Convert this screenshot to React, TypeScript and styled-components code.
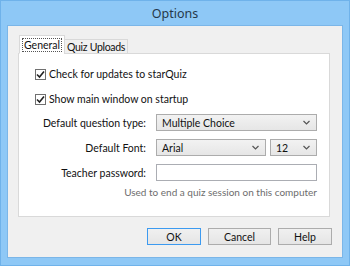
import React from 'react';
import styled, { createGlobalStyle } from 'styled-components';

const Global = createGlobalStyle`
  html, body { margin: 0; padding: 0; background: #8ec8f6; }
  body { font-family: Lato, "Noto Sans", sans-serif; }
`;

const Frame = styled.div`
  width: 350px;
  height: 266px;
  box-sizing: border-box;
  background: #8ec8f6;
  border: 1px solid #6fb2ea;
  display: flex;
  flex-direction: column;
  padding: 0 6px 7px 6px;
`;

const Title = styled.div`
  height: 24px;
  display: flex;
  align-items: center;
  justify-content: center;
  font-family: "Noto Sans", sans-serif;
  font-size: 12.5px;
  color: #26384a;
`;

const Client = styled.div`
  flex: 1;
  background: #f0f0f0;
  border: 1px solid #7bb6e8;
  padding: 9px 12px 0 10px;
  display: flex;
  flex-direction: column;
`;

const Tabs = styled.div`
  display: flex;
  align-items: flex-end;
  height: 19px;
  margin-bottom: -1px;
  position: relative;
  z-index: 1;
`;

const Tab = styled.div<{ $active?: boolean }>`
  box-sizing: border-box;
  height: ${p => (p.$active ? 19 : 15)}px;
  padding: 0 ${p => (p.$active ? 3 : 2)}px;
  margin-left: ${p => (p.$active ? 1 : -1)}px;
  border: 1px solid #d9d9d9;
  border-bottom: ${p => (p.$active ? '1px solid #fff' : '1px solid #d9d9d9')};
  background: ${p => (p.$active ? '#fff' : '#f0f0f0')};
  font-size: 10.5px;
  letter-spacing: ${p => (p.$active ? 0 : -0.3)}px;
  color: #111;
  display: flex;
  align-items: center;
`;

const Focus = styled.span`
  outline: 1px dotted #555;
  padding: 0 1px;
  line-height: 12px;
`;

const Panel = styled.div`
  height: 164px;
  background: #fff;
  border: 1px solid #d9d9d9;
  box-sizing: border-box;
  padding: 13px 14px 0 16px;
  font-size: 10.5px;
  color: #111;
`;

const Check = styled.label`
  display: flex;
  align-items: center;
  gap: 3px;
  height: 14px;
  margin-bottom: 11px;
`;

const Box = styled.span`
  width: 11px;
  height: 11px;
  box-sizing: border-box;
  border: 1px solid #707070;
  background: #fff;
  display: flex;
  align-items: center;
  justify-content: center;
`;

const Form = styled.div`
  display: grid;
  grid-template-columns: 111px 1fr;
  column-gap: 10px;
  row-gap: 8px;
  align-items: center;
  margin-top: -3px;
`;

const Label = styled.div`
  text-align: right;
`;

const Combo = styled.div<{ $w?: number }>`
  box-sizing: border-box;
  height: 17px;
  width: ${p => (p.$w ? `${p.$w}px` : '100%')};
  border: 1px solid #acacac;
  background: linear-gradient(#f2f2f2, #e6e6e6);
  display: flex;
  align-items: center;
  justify-content: space-between;
  padding: 0 6px 0 5px;
`;

const Pair = styled.div`
  display: flex;
  gap: 4px;
`;

const Input = styled.div`
  box-sizing: border-box;
  height: 17px;
  border: 1px solid #abadb3;
  background: #fff;
`;

const Hint = styled.div`
  grid-column: 1 / 3;
  text-align: right;
  color: #6d6d6d;
  font-size: 10px;
  margin-top: -3px;
`;

const Buttons = styled.div`
  display: flex;
  justify-content: flex-end;
  gap: 7px;
  margin-top: 11px;
  margin-right: -2px;
`;

const Button = styled.div<{ $w: number; $default?: boolean }>`
  box-sizing: border-box;
  width: ${p => p.$w}px;
  height: 17px;
  border: 1px solid ${p => (p.$default ? '#3c9af0' : '#acacac')};
  background: linear-gradient(#f0f0f0, #e5e5e5);
  display: flex;
  align-items: center;
  justify-content: center;
  font-size: 10.5px;
  color: #111;
`;

const Tick = () => (
  <svg width="9" height="9" viewBox="0 0 9 9">
    <path d="M1 4.5 L3.5 7 L8 1.5" fill="none" stroke="#222" strokeWidth="1.6" />
  </svg>
);

const Arrow = () => (
  <svg width="7" height="5" viewBox="0 0 7 5">
    <path d="M0.5 1 L3.5 4 L6.5 1" fill="none" stroke="#555" strokeWidth="1.2" />
  </svg>
);

export default function App() {
  return (
    <Frame>
      <Global />
      <Title>Options</Title>
      <Client>
        <Tabs>
          <Tab $active><Focus>General</Focus></Tab>
          <Tab>Quiz Uploads</Tab>
        </Tabs>
        <Panel>
          <Check><Box><Tick /></Box>Check for updates to starQuiz</Check>
          <Check><Box><Tick /></Box>Show main window on startup</Check>
          <Form>
            <Label>Default question type:</Label>
            <Combo>Multiple Choice<Arrow /></Combo>
            <Label>Default Font:</Label>
            <Pair>
              <Combo $w={110}>Arial<Arrow /></Combo>
              <Combo $w={47}>12<Arrow /></Combo>
            </Pair>
            <Label>Teacher password:</Label>
            <Input />
            <Hint>Used to end a quiz session on this computer</Hint>
          </Form>
        </Panel>
        <Buttons>
          <Button $w={54} $default>OK</Button>
          <Button $w={63}>Cancel</Button>
          <Button $w={54}>Help</Button>
        </Buttons>
      </Client>
    </Frame>
  );
}
